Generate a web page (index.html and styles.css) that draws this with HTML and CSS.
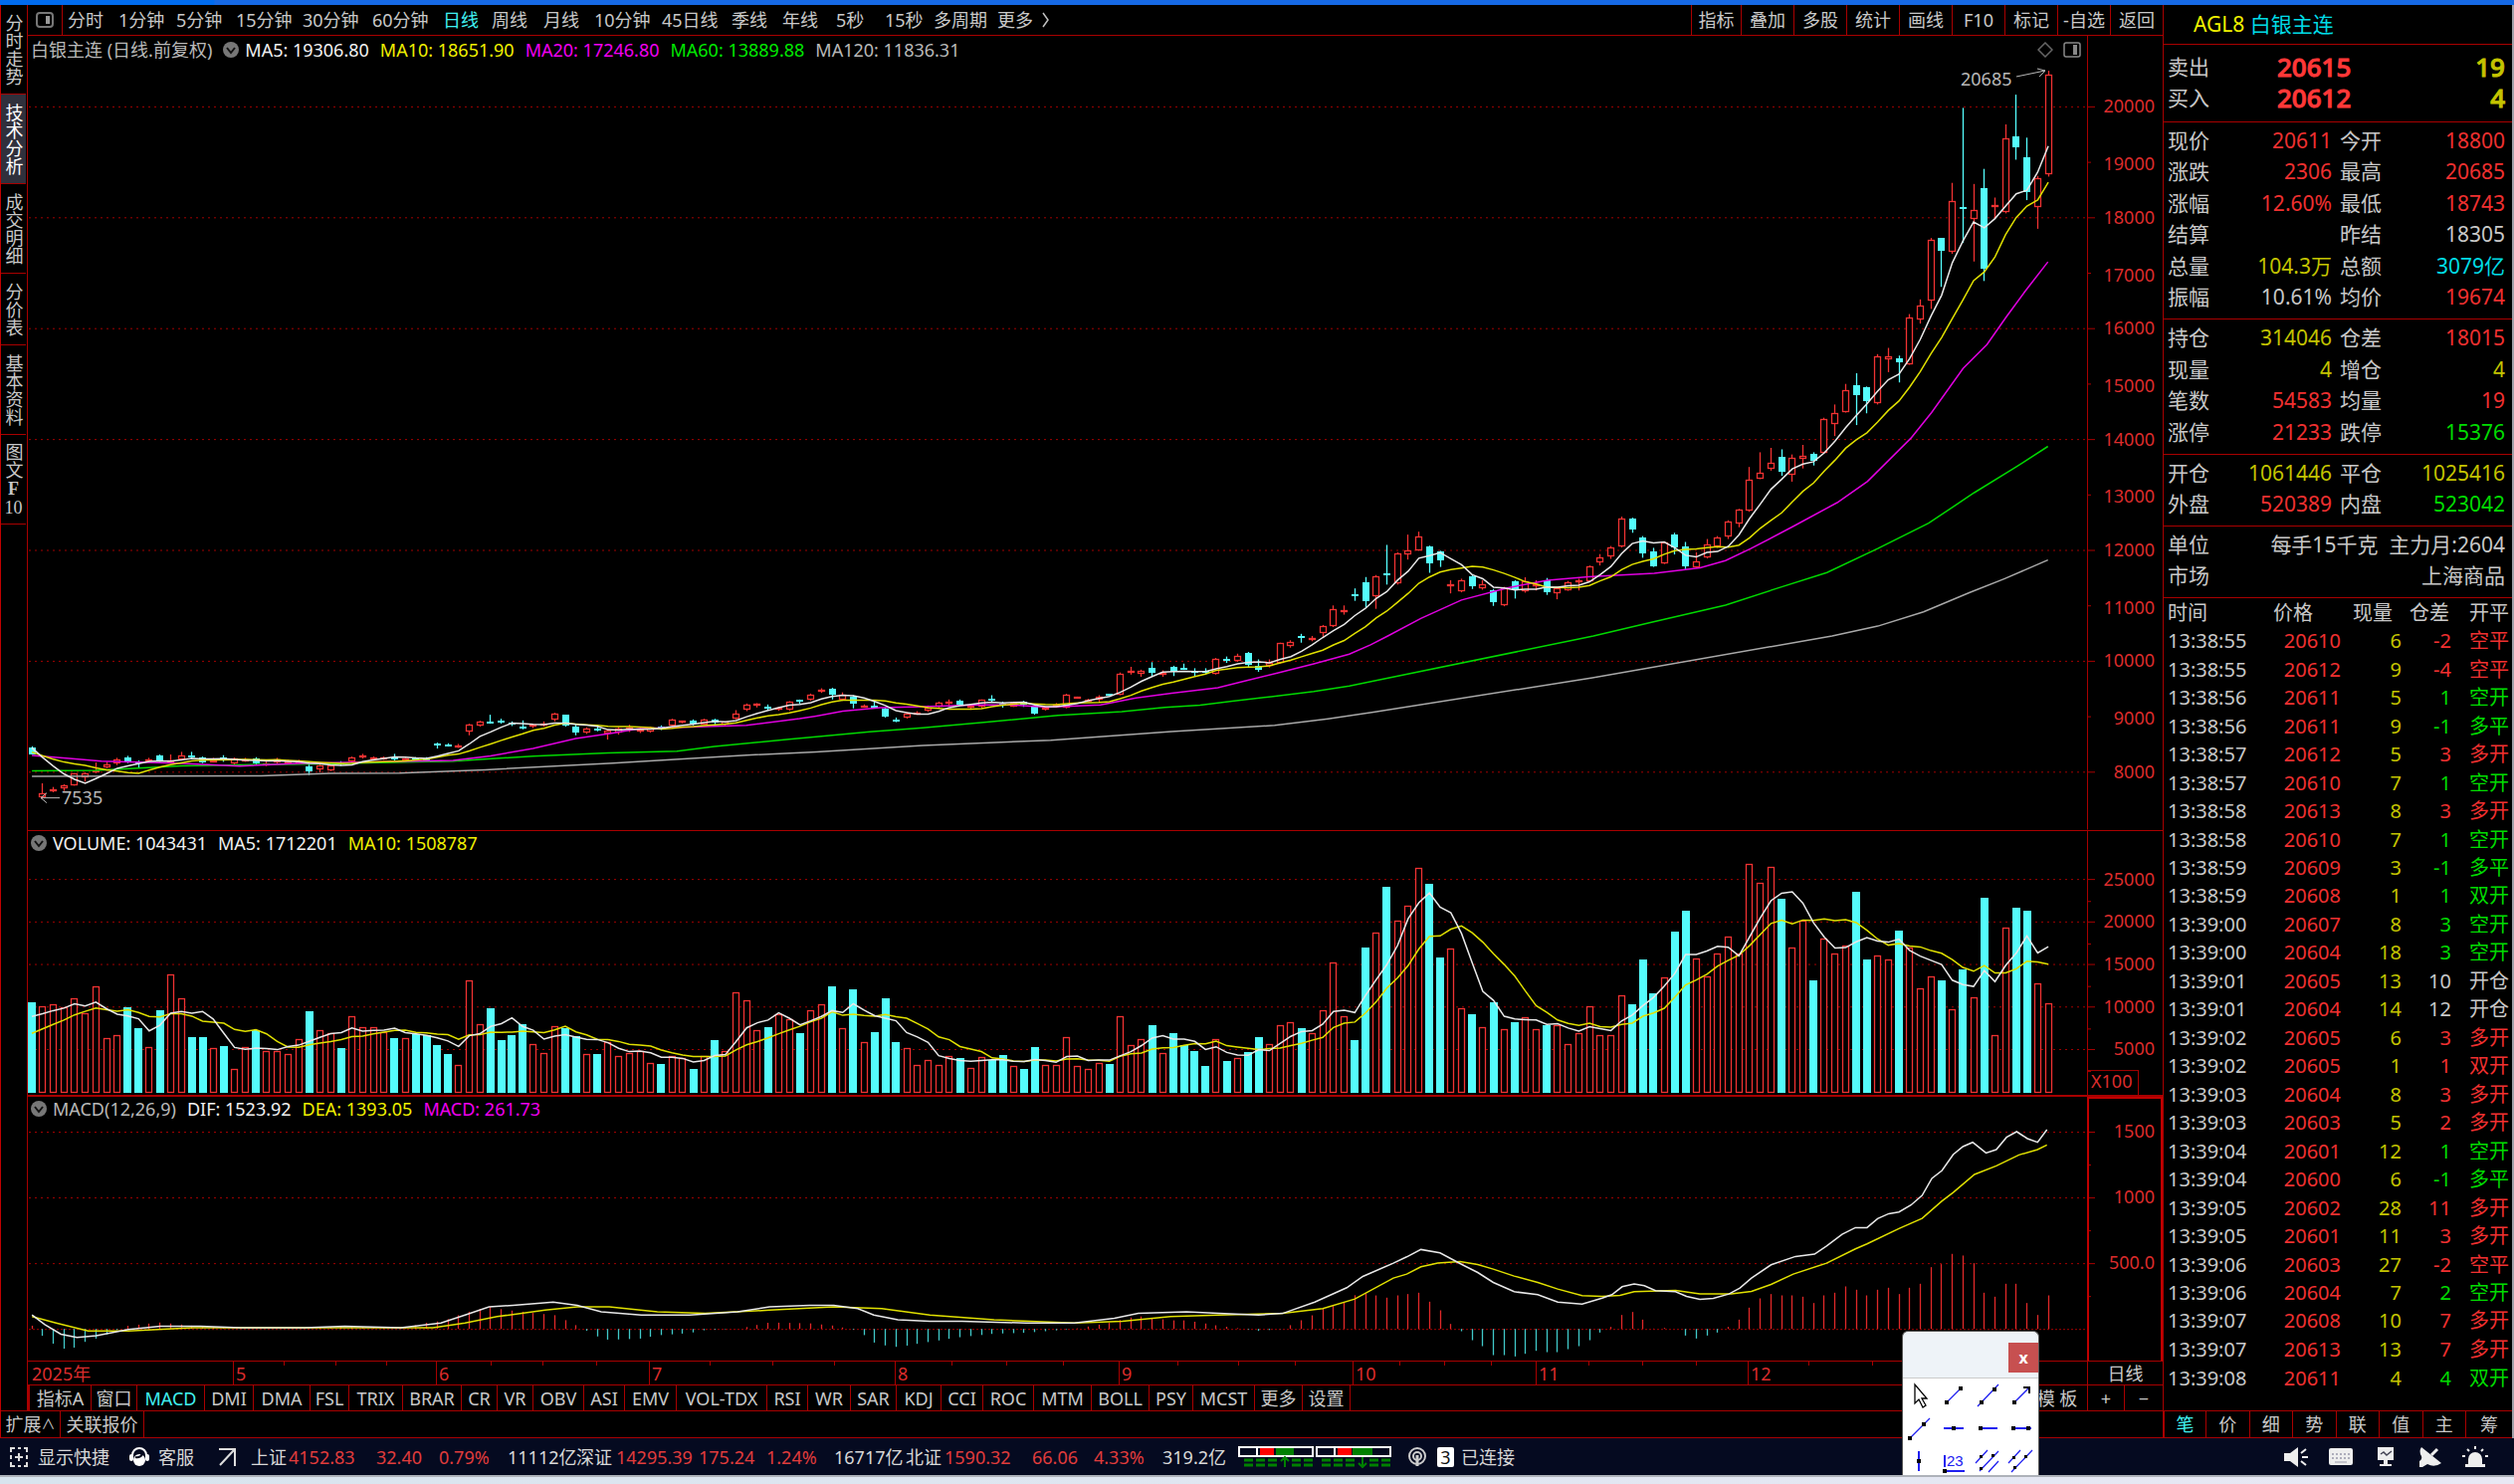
FILE: index.html
```html
<!DOCTYPE html>
<html lang="zh-CN">
<head>
<meta charset="utf-8">
<title>AGL8 白银主连</title>
<link rel="stylesheet" href="styles.css">
</head>
<body>
<div class="title-strip"></div>
<div class="app">
  <div class="workspace">
    <nav class="side-nav">
      <button>分时走势</button>
      <button class="active">技术分析</button>
      <button>成交明细</button>
      <button class="short">分价表</button>
      <button>基本资料</button>
      <button>图文<b>F</b><span class="combine">10</span></button>
      <span class="side-rest"></span>
    </nav>
    <main class="charts">
      <div class="toolbar">
        <div class="periods">
          <button class="pane-toggle" aria-label="侧栏"><svg width="18" height="16"><rect x="1" y="1" width="16" height="14" rx="3" fill="none" stroke="#777" stroke-width="2"/><rect x="10" y="4" width="4" height="8" fill="#999"/></svg></button>
          <button>分时</button><button>1分钟</button><button>5分钟</button><button>15分钟</button><button>30分钟</button><button>60分钟</button><button class="on">日线</button><button>周线</button><button>月线</button><button>10分钟</button><button>45日线</button><button>季线</button><button>年线</button><button>5秒</button><button>15秒</button><button>多周期</button><button>更多</button><button aria-label="展开"><svg width="8" height="16"><path d="M1 1 L6 8 L1 15" fill="none" stroke="#c0c0c0" stroke-width="1.5"/></svg></button>
        </div>
        <div class="actions">
          <button>指标</button><button>叠加</button><button>多股</button><button>统计</button><button>画线</button><button>F10</button><button>标记</button><button>-自选</button><button>返回</button>
        </div>
      </div>

      <section class="panel price">
        <div class="legend">
          <div class="legend-text">
            <span class="grey">白银主连 (日线.前复权)</span>
            <svg class="drop" width="16" height="16"><circle cx="8" cy="8" r="8" fill="#777"/><path d="M4 6 L8 11 L12 6" fill="none" stroke="#111" stroke-width="2"/></svg>
            <span class="white">MA5: 19306.80</span><span class="yellow">MA10: 18651.90</span><span class="magenta">MA20: 17246.80</span><span class="green">MA60: 13889.88</span><span class="grey">MA120: 11836.31</span>
            <span class="marks">
              <svg width="16" height="16"><path d="M8 1 L15 8 L8 15 L1 8Z" fill="none" stroke="#666" stroke-width="1.5"/></svg>
              <svg width="18" height="16"><rect x="1" y="1" width="16" height="14" rx="2" fill="none" stroke="#888" stroke-width="1.5"/><rect x="10" y="3" width="4" height="10" fill="#888"/></svg>
            </span>
          </div>
          <div class="legend-axis"></div>
        </div>
        <svg class="plot" id="price"></svg>
      </section>

      <section class="panel volume">
        <div class="legend">
          <div class="legend-text">
            <svg class="drop" width="16" height="16"><circle cx="8" cy="8" r="8" fill="#777"/><path d="M4 6 L8 11 L12 6" fill="none" stroke="#111" stroke-width="2"/></svg>
            <span class="white">VOLUME: 1043431</span><span class="white">MA5: 1712201</span><span class="yellow">MA10: 1508787</span>
          </div>
          <div class="legend-axis"></div>
        </div>
        <svg class="plot" id="volume"></svg>
      </section>

      <section class="panel macd">
        <div class="legend">
          <div class="legend-text">
            <svg class="drop" width="16" height="16"><circle cx="8" cy="8" r="8" fill="#777"/><path d="M4 6 L8 11 L12 6" fill="none" stroke="#111" stroke-width="2"/></svg>
            <span class="grey">MACD(12,26,9)</span><span class="white">DIF: 1523.92</span><span class="yellow">DEA: 1393.05</span><span class="magenta">MACD: 261.73</span>
          </div>
          <div class="legend-axis"></div>
        </div>
        <svg class="plot" id="macd"></svg>
      </section>

      <div class="timeline">
        <svg id="timeline"></svg>
        <span>日线</span>
      </div>

      <div class="indicator-row">
        <div class="indicators">
          <button>指标A</button><button>窗口</button><button class="on">MACD</button><button>DMI</button><button>DMA</button><button>FSL</button><button>TRIX</button><button>BRAR</button><button>CR</button><button>VR</button><button>OBV</button><button>ASI</button><button>EMV</button><button>VOL-TDX</button><button>RSI</button><button>WR</button><button>SAR</button><button>KDJ</button><button>CCI</button><button>ROC</button><button>MTM</button><button>BOLL</button><button>PSY</button><button>MCST</button><button>更多</button><button>设置</button>
        </div>
        <div class="template-tools"><button class="template">模 板</button><button>+</button><button>−</button></div>
      </div>
    </main>
    <div class="extend-row"><button>扩展<small>∧</small></button><button>关联报价</button></div>
  </div>

  <aside class="quote">
    <h1><span class="yellow">AGL8</span> <span class="aqua">白银主连</span></h1>
    <table class="bidask">
      <tr><th>卖出</th><td>20615</td><td class="olive">19</td></tr>
      <tr><th>买入</th><td>20612</td><td class="olive">4</td></tr>
    </table>
    <table class="facts rows6">
      <tr><th>现价</th><td class="red">20611</td><th>今开</th><td class="red">18800</td></tr>
      <tr><th>涨跌</th><td class="red">2306</td><th>最高</th><td class="red">20685</td></tr>
      <tr><th>涨幅</th><td class="red">12.60%</td><th>最低</th><td class="red">18743</td></tr>
      <tr><th>结算</th><td></td><th>昨结</th><td>18305</td></tr>
      <tr><th>总量</th><td class="olive">104.3万</td><th>总额</th><td class="aqua">3079亿</td></tr>
      <tr><th>振幅</th><td>10.61%</td><th>均价</th><td class="red">19674</td></tr>
    </table>
    <table class="facts rows4">
      <tr><th>持仓</th><td class="olive">314046</td><th>仓差</th><td class="red">18015</td></tr>
      <tr><th>现量</th><td class="olive">4</td><th>增仓</th><td class="olive">4</td></tr>
      <tr><th>笔数</th><td class="red">54583</td><th>均量</th><td class="red">19</td></tr>
      <tr><th>涨停</th><td class="red">21233</td><th>跌停</th><td class="lime">15376</td></tr>
    </table>
    <table class="facts rows2">
      <tr><th>开仓</th><td class="olive">1061446</td><th>平仓</th><td class="olive">1025416</td></tr>
      <tr><th>外盘</th><td class="red">520389</td><th>内盘</th><td class="lime">523042</td></tr>
    </table>
    <table class="facts rows2 wide">
      <tr><th>单位</th><td>每手15千克 &nbsp;主力月:2604</td></tr>
      <tr><th>市场</th><td>上海商品</td></tr>
    </table>
    <table class="ticks">
      <thead><tr><th>时间</th><th>价格</th><th>现量</th><th>仓差</th><th>开平</th></tr></thead>
      <tbody id="ticks"></tbody>
    </table>
    <div class="quote-tabs"><button class="on">笔</button><button>价</button><button>细</button><button>势</button><button>联</button><button>值</button><button>主</button><button>筹</button></div>
  </aside>
</div>

<footer class="status">
  <button class="quick"><svg width="18" height="20" fill="none" stroke="#ddd" stroke-width="2"><path d="M1 5V1h4M8 1h3M14 1h3v4M17 8v4M17 15v4h-3M11 19H8M5 19H1v-4M1 12V8M9 6v8M5 10h8"/></svg>显示快捷</button>
  <button class="service"><svg width="20" height="20"><path d="M3 12V8a7 7 0 0 1 14 0v4" fill="none" stroke="#fff" stroke-width="2"/><rect x="0" y="7" width="4" height="7" rx="2" fill="#fff"/><rect x="16" y="7" width="4" height="7" rx="2" fill="#fff"/><circle cx="10" cy="13" r="6" fill="#fff"/><path d="M6 10q5 1 7-3" stroke="#050a20" stroke-width="2" fill="none"/></svg>客服</button>
  <button class="jump" aria-label="跳转"><svg width="20" height="20" fill="none" stroke="#ddd" stroke-width="2"><path d="M2 2h16v17M17 3L3 18"/></svg></button>
  <div class="ticker">
    <span>上证</span><b>4152.83</b><b>32.40</b><b>0.79%</b><span>11112亿</span>
    <span>深证</span><b>14295.39</b><b>175.24</b><b>1.24%</b><span>16717亿</span>
    <span>北证</span><b>1590.32</b><b>66.06</b><b>4.33%</b><span>319.2亿</span>
  </div>
  <svg class="gauge" width="154" height="22">
    <g fill="none" stroke="#fff" stroke-width="2"><rect x="1" y="1" width="74" height="9"/><rect x="79" y="1" width="74" height="9"/><path d="M19 1v9M97 1v9"/></g>
    <path d="M22 2h14v7h-14zM100 2h14v7h-14z" fill="#f00"/><path d="M38 2h18v7h-18zM115 2h20v7h-20z" fill="#008000"/>
    <path d="M6 14h34M54 14h21M6 19h34M54 19h21M84 14h34M132 14h21M84 19h34M132 19h21" stroke="#008000" stroke-width="3" stroke-dasharray="9 3"/>
    <path d="M47 21v-9M43 15l4-4 4 4M125 11v9M121 17l4 4 4-4" stroke="#008000" stroke-width="2" fill="none"/>
  </svg>
  <svg class="antenna" width="20" height="22" fill="none" stroke="#ccc" stroke-width="2"><circle cx="10" cy="10" r="8"/><circle cx="10" cy="10" r="4"/><path d="M10 9v11" stroke-width="3"/></svg>
  <span class="badge">3</span><span class="linked">已连接</span>
  <div class="tray">
    <button aria-label="声音"><svg width="26" height="22"><path d="M1 7h6l8-6v20l-8-6H1z" fill="#eee"/><path d="M18 7l5-4M19 11h6M18 15l5 4" stroke="#eee" stroke-width="2"/></svg></button>
    <button aria-label="键盘"><svg width="26" height="22"><rect x="1" y="2" width="24" height="17" rx="2" fill="#eee"/><path d="M4 8h18M4 12h18" stroke="#99a" stroke-width="1.5" stroke-dasharray="2 2"/><path d="M7 16h12" stroke="#99a"/></svg></button>
    <button aria-label="行情"><svg width="26" height="22"><path d="M5 1h16v13H5zM11 14h4v4h4v2H7v-2h4z" fill="#eee"/><path d="M8 8l3-2 3 3 5-4" fill="none" stroke="#445" stroke-width="1.5"/></svg></button>
    <button aria-label="信号"><svg width="26" height="22"><path d="M4 1 L24 17 Q17 22 10 18 L5 21 L2 21 L2 15 Q5 13 4 10 Q1 5 4 1Z" fill="#eee"/><path d="M14 9l6-6" stroke="#eee" stroke-width="3"/></svg></button>
    <button aria-label="警报"><svg width="26" height="22"><path d="M6 18v-5a7 7 0 0 1 14 0v5zM3 18h20v3H3z" fill="#eee"/><path d="M13 0v3M5 3l2 2M21 3l-2 2M0 10h3M23 10h3" stroke="#eee" stroke-width="2"/></svg></button>
  </div>
</footer>
<div class="desktop-edge"></div>

<div class="draw-box">
  <div class="draw-head"><button aria-label="关闭">x</button></div>
  <div class="draw-tools">
    <button aria-label="选择"><svg viewBox="0 0 34 32"><path d="M12 5v19l4-4 4 8 3-2-4-7h5z" fill="#fff" stroke="#000" stroke-width="1.3"/></svg></button>
    <button aria-label="线段"><svg viewBox="0 0 34 32"><path d="M10 23L24 9"/><path class="dot" d="M8 21h4v4H8zM22 7h4v4h-4z"/></svg></button>
    <button aria-label="直线"><svg viewBox="0 0 34 32"><path d="M7 27L28 5"/><path class="dot" d="M9 21h4v4H9zM22 8h4v4h-4z"/></svg></button>
    <button aria-label="箭头"><svg viewBox="0 0 34 32"><path d="M10 23L25 8"/><path d="M19 8h6v6" stroke="#000" stroke-width="2"/><path class="dot" d="M8 21h4v4H8z"/></svg></button>
    <button aria-label="射线"><svg viewBox="0 0 34 32"><path d="M7 26L27 6"/><path class="dot" d="M5 24h4v4H5zM19 10h4v4h-4z"/></svg></button>
    <button aria-label="水平线"><svg viewBox="0 0 34 32"><path d="M7 16h20" stroke-width="2"/><path class="dot" d="M15 14h4v4h-4z"/></svg></button>
    <button aria-label="水平射线"><svg viewBox="0 0 34 32"><path d="M8 16h19" stroke-width="2"/><path class="dot" d="M8 14h4v4H8z"/></svg></button>
    <button aria-label="水平线段"><svg viewBox="0 0 34 32"><path d="M8 16h19" stroke-width="2"/><path class="dot" d="M7 14h4v4H7zM22 14h4v4h-4z"/></svg></button>
    <button aria-label="垂直线"><svg viewBox="0 0 34 32"><path d="M16 6v20" stroke-width="2"/><path class="dot" d="M14 14h4v4h-4z"/></svg></button>
    <button aria-label="价格标注"><svg viewBox="0 0 34 32"><path d="M8 10v12M8 26h20" stroke-width="2"/><text x="10" y="21">23</text><path class="dot" d="M6 24h4v4H6z"/></svg></button>
    <button aria-label="平行线"><svg viewBox="0 0 34 32"><path d="M5 18L17 5M9 26L28 6M18 27L28 16"/><path class="dot" d="M9 10h3v3H9zM9 22h3v3H9zM21 9h3v3h-3z"/></svg></button>
    <button aria-label="通道线"><svg viewBox="0 0 34 32"><path d="M4 18L16 5M7 27L28 5"/><path class="dot" d="M8 11h3v3H8zM9 21h3v3H9zM20 10h3v3h-3z"/></svg></button>
  </div>
</div>
<script src="chart.js"></script>
</body>
</html>
```
FILE: styles.css
```css
* { box-sizing: border-box; }
:root { --line: #a80000; --text: #c8c8c8; --red: #f03030; }
body {
  margin: 0; min-height: 100vh; display: flex; flex-direction: column; position: relative;
  background: #000; color: var(--text);
  font: 18px/24px "Noto Sans", "Noto Sans CJK SC", sans-serif;
}
button {
  margin: 0; padding: 0; border: 0; background: none; color: inherit; font: inherit;
  white-space: nowrap; display: flex; align-items: center; justify-content: center;
}
svg { display: block; flex: none; }
.title-strip { height: 5px; background: linear-gradient(90deg, #006cf0 215px, #1669e6 216px); }
.app { flex: 1; display: grid; grid-template-columns: 1fr 351px; border-right: 2px solid #a0a0a8; min-height: 0; }
.workspace { display: grid; grid-template-columns: 27px 1fr; grid-template-rows: 1fr 26px; border-left: 1px solid #c00000; min-width: 0; border-bottom: 1px solid var(--line); }

.white { color: #f0f0f0; }
.grey { color: #b8b8b8; }
.yellow { color: #f0f000; }
.magenta { color: #f000f0; }
.green { color: #00e800; }
.aqua { color: #00dce6; }
.olive { color: #c4c400; }
.lime { color: #00dc00; }
.red { color: var(--red); }
.on { color: #40f0f0; }

.side-nav { display: flex; flex-direction: column; border-right: 1px solid var(--line); border-bottom: 1px solid var(--line); padding-right: 1px; }
.side-nav button {
  height: 90px; width: 100%; border-bottom: 1px solid var(--line);
  writing-mode: vertical-rl; text-orientation: upright; line-height: 24px;
}
.side-nav .short { height: 72px; }
.side-nav .active { background: #30303c; color: #fff; }
.side-nav b { font-family: "Liberation Serif", serif; line-height: 24px; }
.combine { text-combine-upright: all; font-family: "Liberation Serif", serif; }

.charts { display: flex; flex-direction: column; min-width: 0; }
.toolbar { height: 31px; display: flex; justify-content: space-between; border-bottom: 1px solid var(--line); }
.periods { display: grid; grid-template-columns: 40px 51px 58px 60px 67px 70px 71px 49px 52px 51px 68px 70px 51px 54px 49px 49px 64px 45px 12px; }
.periods button { justify-content: flex-start; }
.periods .pane-toggle { border-right: 1px solid var(--line); justify-content: center; width: 35px; }
.actions { display: grid; grid-template-columns: 50px repeat(8, 53px); }
.actions button { border-left: 1px solid var(--line); }

.panel { display: flex; flex-direction: column; min-height: 0; border-bottom: 1px solid var(--line); }
.price { flex: 800 1 0; }
.volume { flex: 266 1 0; border-bottom-width: 2px; }
.macd { flex: 266 1 0; }
.legend { display: grid; grid-template-columns: 1fr 76px; height: 28px; flex: none; }
.volume .legend, .macd .legend { height: 24px; }
.legend-text { display: flex; align-items: center; gap: 11px; padding-left: 3px; }
.legend .drop { margin-right: -5px; }
.marks { margin-left: auto; display: flex; gap: 10px; padding-right: 6px; }
.legend-axis { border-left: 1px solid var(--line); }
.macd .legend-axis { border: 2px solid #c00000; border-bottom: 0; }
.plot { width: 100%; flex: 1 1 0; height: 0; min-height: 0; overflow: visible; }
.plot text, #timeline text { font: 18px "Noto Sans", "Noto Sans CJK SC", sans-serif; fill: #dc2c2c; }
.plot .mark { fill: #b8b8b8; }
.plot .end { text-anchor: end; }

.timeline { display: grid; grid-template-columns: 1fr 76px; height: 24px; border-bottom: 1px solid var(--line); text-align: center; }
#timeline { width: 100%; height: 23px; overflow: visible; }
.timeline span { line-height: 24px; border-left: 1px solid var(--line); }
.indicator-row { display: flex; justify-content: space-between; height: 26px; border-bottom: 1px solid var(--line); }
.indicators {
  display: grid; border-left: 2px solid var(--line);
  grid-template-columns: 62px 46px 68px 49px 57px 39px 54px 59px 36px 36px 51px 41px 52px 91px 41px 43px 46px 45px 42px 51px 58px 58px 44px 62px 48px 48px;
}
.indicators button { border-right: 1px solid var(--line); }
.template-tools { display: grid; grid-template-columns: 60px 37px 39px; }
.template-tools button + button { border-left: 1px solid var(--line); }
.extend-row { grid-column: 1 / 3; display: grid; grid-template-columns: 60px 84px; }
.extend-row button { border-right: 1px solid var(--line); }
.extend-row small { font-size: 14px; }

.quote { display: flex; flex-direction: column; border-left: 1px solid var(--line); font-size: 21px; }
.quote h1 { margin: 0; height: 40px; padding-left: 30px; font: inherit; line-height: 39px; border-bottom: 1px solid var(--line); }
.quote table { border-collapse: collapse; table-layout: fixed; width: 100%; }
.quote th, .quote td { padding: 0; font-weight: 400; }
.quote th { text-align: left; }
.quote td { text-align: right; }
.quote .bidask, .quote .facts { display: block; padding: 2px 7px 6px 4px; border-bottom: 1px solid var(--line); }
.bidask tbody, .facts tbody { display: grid; }
.bidask tr { display: grid; grid-template-columns: 110px 1fr 1fr; align-items: center; }
.quote .bidask { height: 78px; padding-top: 6px; }
.bidask tbody { grid-template-rows: 31px 31px; }
.quote .bidask td { font-size: 26px; font-weight: 500; text-align: left; color: #ff3838; -webkit-text-stroke: 1px; }
.quote .bidask td.olive { text-align: right; color: #c4c400; }
.facts tbody { height: 100%; grid-auto-rows: 1fr; }
.facts tr { display: grid; grid-template-columns: 43px 122px 51px 1fr; align-items: center; }
.facts th + td + th { padding-left: 8px; }
.facts.wide tr { grid-template-columns: 43px 1fr; }
.rows6 { height: 198px; }
.rows4 { height: 136px; }
.rows2 { height: 72px; }
.ticks { height: 798px; font-size: 20px; line-height: 24px; }
.ticks thead { height: 29px; }
.ticks th:nth-child(1) { width: 95px; padding-left: 4px; }
.ticks th:nth-child(2) { width: 83px; padding-left: 15px; }
.ticks th:nth-child(3) { width: 61px; padding-left: 12px; }
.ticks th:nth-child(4) { width: 50px; padding-left: 8px; }
.ticks th:nth-child(5) { padding-left: 18px; }
.ticks td:nth-child(1) { text-align: left; padding-left: 4px; }
.ticks td:nth-child(5) { text-align: left; padding-left: 18px; }
.quote-tabs { margin-top: auto; height: 28px; display: grid; grid-template-columns: 42px repeat(6, 1fr) 47px; border-top: 1px solid var(--line); border-bottom: 1px solid var(--line); font-size: 18px; }
.quote-tabs button { border-left: 1px solid var(--line); }

.status { height: 37px; display: flex; align-items: center; background: #050a20; color: #d8d8d8; }
.quick { gap: 10px; margin-left: 10px; width: 120px; justify-content: flex-start; }
.service { gap: 9px; width: 88px; justify-content: flex-start; }
.jump { width: 34px; justify-content: flex-start; }
.ticker { display: grid; grid-template-columns: 38px 88px 63px 69px 69px 40px 83px 68px 68px 72px 39px 88px 62px 69px 76px; white-space: nowrap; }
.ticker b { font-weight: 400; color: #e03c3c; }
.gauge { margin-right: 16px; }
.antenna { margin-right: 10px; }
.badge { width: 17px; height: 20px; margin-right: 7px; background: #fff; color: #111; line-height: 20px; text-align: center; border-radius: 2px; }
.tray { margin-left: auto; display: flex; gap: 19px; padding-right: 26px; }
.desktop-edge { height: 9px; border-top: 2px solid #aeb2ba; background: linear-gradient(90deg, #d8e4ee, #e8e8f4); }

.draw-box { position: absolute; right: 477px; bottom: 9px; width: 138px; height: 145px; border: 1px solid #555; border-bottom: 0; border-radius: 6px 6px 0 0; background: #eef3f8; overflow: hidden; }
.draw-head { height: 47px; border-bottom: 1px solid #ccc; display: flex; justify-content: flex-end; align-items: flex-start; padding-top: 11px; }
.draw-head button { width: 30px; height: 30px; background: #c75050; color: #fff; font-weight: 700; font-size: 16px; }
.draw-tools { display: grid; grid-template-columns: repeat(4, 1fr); grid-auto-rows: 33px; background: #fff; }
.draw-tools svg { width: 34px; height: 32px; fill: none; stroke: #2020f0; stroke-width: 1.3; }
.draw-tools .dot { fill: #000; stroke: none; }
.draw-tools text { font: 15px "Liberation Sans", sans-serif; fill: #2020f0; stroke: none; }
```
FILE: chart.js
```js
// Candle blocks: rows are "high,open-close top,open-close bottom,low,colour";
// readings are in 1/unit px steps below the block's base line.
const candleBlocks = [
  { base: 690, unit: 3, rows: `183,188,208,208,c 295,325,338,342,r 306,314,320,322,r 298,302,310,318,r 264,266,300,302,r 262,266,276,290,r 232,256,260,264,r 230,238,246,250,r 218,222,234,240,r 212,216,228,234,c
226,230,233,248,c 218,224,230,232,r 208,210,228,230,c 208,226,230,234,r 200,210,222,226,r 200,210,212,220,c 214,217,232,234,c 218,226,229,232,r 210,216,224,230,c 217,220,234,238,r
218,222,226,230,r 216,220,236,240,c 228,234,240,243,r 218,222,232,236,r 224,228,232,236,r 224,228,232,236,r 232,244,258,270,c 236,242,252,262,r 236,240,256,258,r 228,232,238,242,c
214,217,230,232,r 206,210,216,220,r 214,216,220,226,r 214,216,222,224,r 206,216,219,226,c 218,220,226,228,r 216,218,222,226,c 216,219,223,225,c 172,174,180,190,c 174,178,180,184,c
176,180,185,188,r 115,118,140,150,r 106,108,120,124,r 88,108,113,115,c 100,106,109,115,c 108,113,119,122,c 105,123,126,132,c 116,118,124,128,r 108,116,120,124,r 82,85,104,108,r
88,88,122,124,c 118,124,143,150,c 126,130,143,146,r 120,129,133,138,c 132,137,144,163,r 125,130,143,148,r 118,127,134,140,r 126,132,139,143,r 124,128,139,142,r 120,124,128,134,c
100,103,120,124,r 106,107,112,114,r 102,106,115,120,c 100,103,117,118,r 100,102,112,117,c 108,110,117,120,r 74,86,100,102,r 54,58,73,77,r 53,54,62,66,r 57,63,66,74,c
64,67,72,76,r 47,50,74,76,r 42,44,47,55,c 24,26,44,46,r 8,12,18,22,r` },
  { base: 560, unit: 2.8, rows: `370,372,391,403,c 383,391,405,407,r 391,395,416,428,c 417,420,424,426,r 409,420,424,426,c 426,428,450,454,c 454,459,462,467,c 438,444,454,457,r 436,440,444,446,r 420,426,434,438,r
409,411,422,426,r 403,408,413,422,r 403,407,418,420,c 418,421,424,432,r 403,405,424,426,r 391,400,402,409,c 409,415,418,426,c 409,411,422,424,r 407,409,418,424,c 422,424,443,446,c
424,426,431,434,r 413,418,424,426,r 387,389,426,428,r 395,396,399,400,r 401,403,406,409,r 391,394,403,409,r 387,388,391,393,c 327,330,389,391,r 311,323,329,333,r 319,321,332,339,r
298,315,327,337,c 321,327,330,339,r 308,311,325,337,c 302,315,318,319,c 315,323,326,337,c 315,323,326,331,c 286,288,331,333,r 282,290,293,300,c 274,280,293,297,r 269,273,306,311,c
290,308,319,325,c 290,300,308,313,r 243,245,300,302,r 236,241,251,257,r 218,223,231,243,c 224,229,234,239,r 193,196,217,230,r 138,148,197,199,r 138,152,158,164,r 90,105,108,125,c 58,72,127,144,c` },
  { base: 60, unit: 2.703, rows: `1402,1406,1460,1494,r 1320,1397,1402,1428,c 1340,1342,1424,1428,r 1292,1334,1345,1360,r 1284,1297,1334,1336,r 1322,1324,1370,1396,c 1336,1338,1362,1380,c 1416,1426,1429,1452,r
1412,1415,1447,1449,r 1400,1406,1432,1440,c 1416,1426,1439,1442,r 1440,1444,1476,1486,c 1434,1437,1485,1487,r 1416,1420,1442,1466,c 1408,1420,1447,1450,r 1416,1426,1430,1444,r
1410,1416,1448,1456,c 1434,1438,1451,1468,r 1418,1422,1442,1445,r 1412,1415,1420,1444,r 1376,1378,1418,1420,r 1345,1353,1367,1376,r 1323,1326,1350,1358,r 1243,1247,1323,1327,r
1246,1247,1278,1287,c 1296,1300,1343,1355,c 1328,1337,1379,1380,c 1312,1314,1370,1372,r 1287,1292,1326,1346,c 1312,1325,1379,1386,c 1340,1366,1380,1383,r 1304,1318,1355,1357,r
1296,1301,1324,1328,r 1253,1256,1298,1304,r 1222,1224,1262,1272,r 1108,1143,1228,1230,r 1068,1123,1139,1141,r 1056,1098,1112,1118,r 1060,1080,1120,1132,c 1074,1082,1128,1148,r
1048,1077,1087,1112,r 1068,1073,1092,1104,c 974,977,1070,1072,r 938,961,990,1024,r 882,899,958,960,r 853,885,913,994,c 889,890,930,962,c 801,806,934,938,r
784,806,816,850,r 805,812,824,878,c 692,701,828,830,r 652,668,706,718,r 485,490,656,678,r 485,486,520,618,c 335,385,523,528,r 131,400,403,498,c
338,409,434,549,r 297,350,568,602,c 375,396,401,432,r 176,214,414,418,r 95,209,237,272,c 212,266,360,382,c 316,323,402,460,r 30,40,312,318,r` }
];
const candles = candleBlocks.flatMap(b => b.rows.split(/\s+/).map(r => {
  const p = r.split(",");
  return { y: p.slice(0, 4).map(v => b.base + v / b.unit), up: p[4] === "r" };
}));

// Volume bar tops, "c" marks a falling day.
const volumeBlocks = [
  { base: 690, unit: 3, rows: "953c 963 959 967 941 985 905 1058 1049 966c 1029c 1085 975c 868 941 1056c 1056c 1089 1083c 1152 1085 1036c 1098 1098 1107 1063 980c 1036 1045 1089c 995 1026 1026 1042 1060c 1058 1046c 1050c 1079c 1106c 1139 887 1018 971c 1065c 1051c 1016c 1076 1103 1022 1029c 1052c 1108 1106c 1070 1112 1103 1098 1134 1138c 1112 1118 1151c 1112 1065c 1098 922 945 1036 1025c 989 1003 1043c 977 959" },
  { base: 560, unit: 2.877, rows: "1240c 1362 1249c 1402 1374c 1275c 1400c 1418 1466 1453 1466 1440 1448c 1475 1444 1454c 1439c 1470 1478c 1417c 1466 1466 1388 1471 1479 1462 1465c 1328 1410 1392 1353c 1432 1375c 1410c 1427c 1469c 1392 1457c 1448 1431c 1387c 1406 1354 1345 1362c 1375 1311 1172 1328 1396c 1128c" },
  { base: 840, unit: 3, rows: "293 156c 257 211 99 147c 368c 342 521 539c 576 503c 581 561c 548 581 570c 570 626 595 514 599 599 482 508c 372c 475c 428 291c 228c 370 424 355 306 357 86 143 95 192c 337 257 435c 311 355 332 170c 372c 360 374 287c 337 459 424 435c 522 404c 486 188c 599 279 219c 228c 445 505" }
];
const volumes = volumeBlocks.flatMap(b => b.rows.split(" ").map(r => ({ y: b.base + parseInt(r, 10) / b.unit, up: !r.endsWith("c") })));

// Long curves: control points per block, x and y each with their own unit.
const trace = blocks => blocks.flatMap(([x0, kx, y0, ky, pts]) =>
  pts.split(" ").map(p => { const [x, y] = p.split(",").map(Number); return [x0 + x / kx, y0 + y / ky]; }));
const A = [0, 1.867, 690, 3], B = [820, 2.8, 560, 2.877], C = [1300, 1.96, 60, 2.703];
const M = [0, 1 / 1.611, 0, 1 / 1.611], N = [1400, 2.24, 1100, 3];
const ma20 = trace([
  [...A, "60,211 130,220 190,228 330,234 450,243 560,235 700,230 850,226 920,212 1000,190 1080,160 1150,143 1200,130 1400,120 1500,100"],
  [...B, "0,462 75,448 180,438 300,435 450,430 550,430 650,436 800,430 900,410 1000,396 1130,380 1200,362 1300,337 1400,311 1500,283 1560,256"],
  [...C, "185,1568 250,1520 330,1470 420,1437 500,1416 580,1407 710,1397 800,1382 850,1363 900,1330 983,1270 1070,1205 1130,1147 1215,1030 1256,960 1318,840 1365,775 1403,700 1440,630 1485,550"]]);
const ma60 = trace([
  [...A, "60,257 180,256 340,242 600,236 850,228 1000,213 1140,203 1270,198 1340,184 1480,162"],
  [...B, "0,522 150,508 300,496 480,480 680,460 860,449 980,437 1080,431 1170,419 1280,406 1400,391 1500,375 1568,361"],
  [...C, "590,1568 700,1532 850,1484 950,1439 1050,1395 1150,1330 1250,1261 1340,1178 1420,1110 1485,1052"]]);
const ma120 = trace([
  [...A, "60,274 490,272 620,265 750,264 910,254 1150,234 1400,210"],
  [...B, "0,566 300,547 660,532 1000,507 1290,489 1440,470 1568,451"],
  [0, 1, 0, 1, "1600,682"],
  [...C, "1060,1568 1150,1541 1240,1502 1330,1450 1400,1412 1485,1361"]]);
const dif = trace([
  [...M, "20,820 28,826 38,832 48,834 60,833 80,829 100,827 125,827 150,828 190,828 215,827 250,828 275,825 290,820 305,815 320,814 345,812 360,814 375,818 400,820 430,820 460,818 480,815 505,814 520,814 535,816 545,820 560,823 580,824 600,824 640,825 670,825 695,822 710,819 740,818 760,819 785,820 800,819 820,812 840,803 850,796"],
  [...N, "0,507 30,488 62,466 105,476 150,508 190,535 225,565 272,593 325,602 370,624 425,630 470,612 492,602 515,578 542,570 565,575 590,590 635,593 660,607 690,616 720,613 755,600 780,582 806,552 850,512 905,487 948,480 975,455 1010,420 1040,400 1066,400 1090,373 1115,358 1138,353 1165,332 1190,303 1212,252 1235,228 1260,180 1282,156 1304,143 1334,175 1357,165 1380,128 1403,111 1427,132 1450,143 1471,105"]]);
const dea = trace([
  [...M, "20,821 35,825 55,830 80,830 120,828 200,828 270,828 290,825 310,821 340,817 360,815 380,815 410,818 440,819 480,817 520,815 550,816 580,820 620,823 670,825 700,824 730,821 760,820 800,819 825,816 845,810"],
  [...N, "0,552 30,540 62,518 100,507 150,502 190,511 225,525 272,546 325,565 370,585 425,605 470,607 510,604 542,593 635,589 690,600 760,600 806,592 850,571 900,540 975,507 1040,464 1066,449 1138,403 1190,372 1235,320 1260,294 1308,240 1357,214 1408,181 1450,165 1471,151"]]);
const histTail = "604 600 596 623 649 690 712 739 757 784 784 788 780 771 775 775 766 757 739 716 699 663 654 677 704 702 705 725 734 725 716 699 677 641 613 600 604 604 608 627 604 596 577 587 604 587 581 600 581 569 519 510 479 484 507 596 608 569 569 627 663 604".split(" ").map(v => 1100 + v / 3);

const RED = "#f03232", CYAN = "#54fcfc", LINE = "#a80000";
const barX = i => 32 + 10.72 * i;
const average = (values, seed, n) => {
  const all = seed.concat(values);
  return values.map((_, i) => {
    const end = i + seed.length + 1;
    return [barX(i), all.slice(end - n, end).reduce((a, b) => a + b) / n];
  });
};
const valueAt = (pts, x) => {
  const k = pts.findIndex(p => p[0] >= x);
  if (k < 1) return pts[k < 0 ? pts.length - 1 : 0][1];
  const [a, b] = [pts[k - 1], pts[k]];
  return a[1] + (b[1] - a[1]) * (x - a[0]) / (b[0] - a[0]);
};

// A pen maps design units to the real size of one plot.
function pen(id, top, height, width) {
  const el = document.getElementById(id), r = el.getBoundingClientRect();
  const X = x => (x - 28) * r.width / width, Y = y => (y - top) * r.height / height;
  let out = "";
  return {
    line(x1, y1, x2, y2, color, extra = "") { out += `<path d="M${X(x1)} ${Y(y1)}L${X(x2)} ${Y(y2)}" stroke="${color}" ${extra}/>`; },
    poly(pts, color) { out += `<polyline fill="none" stroke="${color}" stroke-width="1.5" points="${pts.map(p => X(p[0]).toFixed(1) + "," + Y(p[1]).toFixed(1)).join(" ")}"/>`; },
    bar(x, y1, y2, w, up) {
      const l = Math.round(X(x) - w / 2), t = Math.round(Y(y1)), h = Math.max(1, Math.round(Y(y2)) - t);
      out += up ? `<rect x="${l + .5}" y="${t + .5}" width="${w - 1}" height="${Math.max(1, h - 1)}" fill="#000" stroke="${RED}" stroke-width="1.3"/>`
                : `<rect x="${l}" y="${t}" width="${w}" height="${Math.max(2, h)}" fill="${CYAN}"/>`;
    },
    wick(x, y1, y2, color) { out += `<path d="M${Math.round(X(x) - .5) + .5} ${Y(y1)}V${Y(y2)}" stroke="${color}" stroke-width="1.3"/>`; },
    text(x, y, s, cls = "") { out += `<text x="${X(x)}" y="${Y(y) + 6}" class="${cls}">${s}</text>`; },
    axis() { this.line(2097.5, top, 2097.5, top + height, LINE); },
    level(y, major = true) {
      if (major) this.line(29, y, 2097, y, "#a00000", 'stroke-dasharray="2 4"');
      this.line(2098, y, major ? 2105 : 2101, y, LINE);
    },
    done() { el.innerHTML = out; }
  };
}

function draw() {
  let p = pen("price", 64, 771, 2145);
  p.axis();
  for (let v = 20000; v >= 8000; v -= 1000) {
    const y = 107.5 + (20000 - v) * 0.0558;
    p.level(y, v % 2000 === 0);
    p.text(2165, v % 2000 === 0 ? y : y + 2, v, "end");
  }
  candles.forEach((c, i) => {
    p.wick(barX(i), c.y[0], c.y[3], c.up ? RED : CYAN);
    p.bar(barX(i), c.y[1], c.y[2], 7, c.up);
  });
  const closes = candles.map(c => c.up ? c.y[1] : c.y[2]);
  const seed = [761, 761, 761, 761, 761, 751, 751, 751, 751];
  p.poly(ma120, "#a8a8a8");
  p.poly(ma60, "#00d800");
  p.poly(ma20, "#e000e0");
  p.poly(average(closes, seed, 10), "#e0e000");
  p.poly(average(closes, seed, 5), "#e8e8e8");
  p.text(1970, 80, "20685", "mark");
  p.line(2026, 77, 2055, 71, "#b8b8b8");
  p.line(2055, 71, 2047, 69, "#b8b8b8");
  p.line(2055, 71, 2049, 77, "#b8b8b8");
  p.text(62, 803, "7535", "mark");
  p.line(41, 803, 60, 803, "#b8b8b8");
  p.line(41, 803, 47, 798, "#b8b8b8");
  p.line(41, 803, 47, 808, "#b8b8b8");
  p.done();

  p = pen("volume", 860, 240, 2145);
  p.axis();
  [25000, 20000, 15000, 10000, 5000].forEach((v, i) => {
    const y = 884.5 + 42.5 * i;
    p.level(y);
    p.level(y + 22, false);
    p.text(2165, y, v, "end");
  });
  volumes.forEach((v, i) => p.bar(barX(i), v.y, 1097.5, v.up ? 7 : 8, v.up));
  const tops = volumes.map(v => v.y), past = [1055, 1055, 1055, 1055, 1055, 1025, 1025, 1025, 1025];
  p.poly(average(tops, past, 10), "#e0e000");
  p.poly(average(tops, past, 5), "#e8e8e8");
  p.line(2098, 1075.5, 2149, 1075.5, LINE);
  p.line(2148.5, 1075, 2148.5, 1101, LINE);
  p.text(2101, 1087, "X100");
  p.done();

  p = pen("macd", 1126, 241, 2145);
  [["1500", 1137], ["1000", 1203], ["500.0", 1269]].forEach(([s, y]) => {
    p.level(y + .5);
    p.level(y + 33.5, false);
    p.text(2165, y, s, "end");
  });
  p.line(29, 1335.5, 2097, 1335.5, "#a00000", 'stroke-dasharray="2 2"');
  candles.forEach((_, i) => {
    const x = barX(i);
    const y = i >= 128 ? histTail[i - 128] : 1335 + 2 * (valueAt(dif, x) - valueAt(dea, x));
    p.wick(x, 1335, y, y < 1335 ? "#e02828" : "#40c8c8");
  });
  p.poly(dea, "#e0e000");
  p.poly(dif, "#e8e8e8");
  p.line(2098, 1126, 2098, 1367, "#c00000", 'stroke-width="2"');
  p.line(2172, 1126, 2172, 1367, "#c00000", 'stroke-width="2"');
  p.done();

  p = pen("timeline", 1368, 23, 2069);
  p.text(32, 1381, "2025年");
  [["5", 234], ["6", 438], ["7", 652], ["8", 899], ["9", 1124], ["10", 1359], ["11", 1543], ["12", 1756]].forEach(([s, x]) => {
    p.line(x + .5, 1368, x + .5, 1391, LINE);
    p.text(x + 3, 1381, s);
  });
  [285, 337, 388, 493, 545, 599, 713, 776, 838, 956, 1011, 1068, 1183, 1244, 1301, 1406, 1451, 1498, 1596, 1650, 1704, 1817, 1881]
    .forEach(x => p.line(x + .5, 1368, x + .5, 1372, LINE));
  p.done();
}

// time, price, size, open-interest change, kind, colour
const ticks = `38:55 20610 6 -2 空平 red|38:55 20612 9 -4 空平 red|38:56 20611 5 1 空开 lime|38:56 20611 9 -1 多平 lime|38:57 20612 5 3 多开 red|38:57 20610 7 1 空开 lime|38:58 20613 8 3 多开 red|38:58 20610 7 1 空开 lime|38:59 20609 3 -1 多平 lime|38:59 20608 1 1 双开 lime|39:00 20607 8 3 空开 lime|39:00 20604 18 3 空开 lime|39:01 20605 13 10 开仓 plain|39:01 20604 14 12 开仓 plain|39:02 20605 6 3 多开 red|39:02 20605 1 1 双开 red|39:03 20604 8 3 多开 red|39:03 20603 5 2 多开 red|39:04 20601 12 1 空开 lime|39:04 20600 6 -1 多平 lime|39:05 20602 28 11 多开 red|39:05 20601 11 3 多开 red|39:06 20603 27 -2 空平 red|39:06 20604 7 2 空开 lime|39:07 20608 10 7 多开 red|39:07 20613 13 7 多开 red|39:08 20611 4 4 双开 lime`;
document.getElementById("ticks").innerHTML = ticks.split("|").map(row => {
  const [t, price, size, change, kind, color] = row.split(" ");
  return `<tr><td>13:${t}</td><td class="red">${price}</td><td class="olive">${size}</td><td class="${color}">${change}</td><td class="${color}">${kind}</td></tr>`;
}).join("");
draw();
addEventListener("resize", draw);
```
